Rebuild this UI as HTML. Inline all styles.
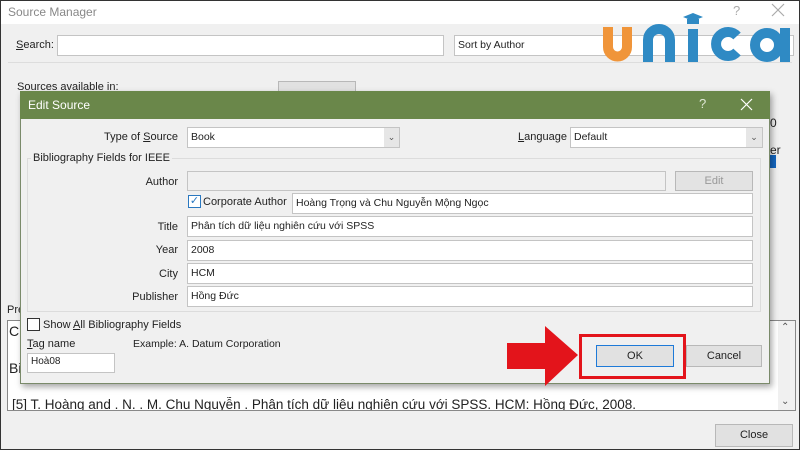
<!DOCTYPE html><html><head><meta charset="utf-8"><style>
*{margin:0;padding:0;box-sizing:border-box}
body{width:800px;height:450px;overflow:hidden;background:#f0f0f0;font-family:"Liberation Sans",sans-serif;font-size:11px;color:#222;position:relative}
.a{position:absolute;white-space:nowrap}
.in{position:absolute;background:#fff;border:1px solid #c4c4c4;padding:0 3px;font-size:10.5px;line-height:19px;white-space:nowrap}
.btn{position:absolute;background:#e1e1e1;border:1px solid #b8b8b8;text-align:center;font-size:11px}
.lbl{position:absolute;text-align:right;white-space:nowrap}
</style></head><body>
<div class="a" style="left:0;top:0;width:800px;height:24px;background:#fff;border:1px solid #333;border-bottom:none"></div>
<div class="a" style="left:0;top:0;width:800px;height:450px;border:1px solid #333;border-top:none"></div>
<div class="a" style="left:8px;top:5px;font-size:12px;color:#888">Source Manager</div>
<div class="a" style="left:733px;top:3px;font-size:13px;color:#aaa">?</div>
<svg class="a" style="left:771px;top:3px" width="14" height="14"><path d="M1 1L13 13M13 1L1 13" stroke="#aaa" stroke-width="1.2"/></svg>
<div class="a" style="left:16px;top:39px"><u>S</u>earch:</div>
<div class="in" style="left:57px;top:35px;width:387px;height:21px"></div>
<div class="in" style="left:454px;top:35px;width:340px;height:21px">Sort by Author</div>
<div class="a" style="left:8px;top:62px;width:784px;height:1px;background:#ddd"></div>
<div class="a" style="left:17px;top:81px">Sou<u>r</u>ces available in:</div>
<div class="btn" style="left:278px;top:81px;width:78px;height:14px"></div>
<div class="a" style="left:770px;top:116px;font-size:12px">0</div>
<div class="a" style="left:770px;top:143px;font-size:12px">er</div>
<div class="a" style="left:770px;top:155px;width:6px;height:13px;background:#1466c0"></div>
<div class="a" style="left:7px;top:304px">Pre</div>
<div class="a" style="left:7px;top:320px;width:789px;height:91px;background:#fff;border:1px solid #888"></div>
<div class="a" style="left:778px;top:321px;width:17px;height:89px;background:#f0f0f0"></div>
<div class="a" style="left:781px;top:322px;font-size:10px;color:#555">⌃</div>
<div class="a" style="left:781px;top:396px;font-size:10px;color:#555">⌄</div>
<div class="a" style="left:9px;top:323px;font-size:14px">Ci</div>
<div class="a" style="left:9px;top:360px;font-size:14px">Bi</div>
<div class="a" style="left:12px;top:397px;font-size:13.5px;height:13px;overflow:hidden;text-decoration:underline">[5] T. Hoàng and . N. . M. Chu Nguyễn . Phân tích dữ liệu nghiên cứu với SPSS. HCM: Hồng Đức, 2008.</div>
<div class="btn" style="left:715px;top:424px;width:78px;height:23px;line-height:21px">Close</div>

<svg class="a" style="left:0;top:0" width="800" height="80">
<path d="M608 27V47a9.5 9.5 0 0 0 19 0V27" fill="none" stroke="#f0953a" stroke-width="10"/>
<path d="M648 62V40a11 11 0 0 1 22 0V62" fill="none" stroke="#2f8ac4" stroke-width="10"/>
<rect x="688" y="29" width="10" height="33" fill="#2f8ac4"/>
<path d="M683 17l10-4 10 4-10 4z" fill="#2f8ac4"/><path d="M687 19v5h12v-5" fill="#2f8ac4"/>
<path d="M737 36A12 12 0 1 0 737 52" fill="none" stroke="#2f8ac4" stroke-width="10"/>
<circle cx="767" cy="45" r="12" fill="none" stroke="#2f8ac4" stroke-width="10"/>
<rect x="780" y="28" width="10" height="34" fill="#2f8ac4"/>
</svg>

<!-- Edit Source dialog -->
<div class="a" style="left:20px;top:91px;width:750px;height:293px;background:#f0f0f0;border:1px solid #7a8a6a;box-shadow:2px 3px 6px rgba(0,0,0,.35)"></div>
<div class="a" style="left:20px;top:91px;width:750px;height:28px;background:#6a874a"></div>
<div class="a" style="left:28px;top:98px;font-size:12px;color:#fff">Edit Source</div>
<div class="a" style="left:699px;top:96px;font-size:13px;color:#dfe8d6">?</div>
<svg class="a" style="left:740px;top:98px" width="13" height="13"><path d="M1 1L12 12M12 1L1 12" stroke="#fff" stroke-width="1.2"/></svg>
<div class="lbl" style="left:60px;width:118px;top:131px">Type of <u>S</u>ource</div>
<div class="in" style="left:187px;top:127px;width:213px;height:21px">Book</div>
<div class="a" style="left:384px;top:128px;width:15px;height:19px;background:#e6e6e6;font-size:9px;text-align:center;line-height:19px;color:#555">⌄</div>
<div class="a" style="left:518px;top:131px"><u>L</u>anguage</div>
<div class="in" style="left:570px;top:127px;width:193px;height:21px">Default</div>
<div class="a" style="left:746px;top:128px;width:16px;height:19px;background:#e6e6e6;font-size:9px;text-align:center;line-height:19px;color:#555">⌄</div>
<div class="a" style="left:27px;top:158px;width:734px;height:154px;border:1px solid #dcdcdc"></div>
<div class="a" style="left:31px;top:152px;background:#f0f0f0;padding:0 2px">Bibliography Fields for IEEE</div>
<div class="lbl" style="left:100px;width:78px;top:176px">Author</div>
<div class="in" style="left:187px;top:171px;width:479px;height:20px;background:#f0f0f0"></div>
<div class="btn" style="left:675px;top:171px;width:78px;height:20px;line-height:18px;color:#999;background:#e3e3e3">Edit</div>
<div class="a" style="left:188px;top:195px;width:13px;height:13px;background:#fff;border:1px solid #2a78c0;font-size:11px;line-height:11px;color:#2a78c0;text-align:center">✓</div>
<div class="a" style="left:203px;top:196px">Corporate Author</div>
<div class="in" style="left:292px;top:193px;width:461px;height:21px">Hoàng Trọng và Chu Nguyễn Mộng Ngọc</div>
<div class="lbl" style="left:100px;width:78px;top:221px">Title</div>
<div class="in" style="left:187px;top:216px;width:566px;height:21px">Phân tích dữ liệu nghiên cứu với SPSS</div>
<div class="lbl" style="left:100px;width:78px;top:244px">Year</div>
<div class="in" style="left:187px;top:240px;width:566px;height:21px">2008</div>
<div class="lbl" style="left:100px;width:78px;top:268px">City</div>
<div class="in" style="left:187px;top:263px;width:566px;height:21px">HCM</div>
<div class="lbl" style="left:100px;width:78px;top:291px">Publisher</div>
<div class="in" style="left:187px;top:286px;width:566px;height:21px">Hồng Đức</div>
<div class="a" style="left:27px;top:318px;width:13px;height:13px;background:#fff;border:1px solid #333"></div>
<div class="a" style="left:43px;top:319px">Show <u>A</u>ll Bibliography Fields</div>
<div class="a" style="left:27px;top:338px"><u>T</u>ag name</div>
<div class="a" style="left:133px;top:338px;font-size:10.5px">Example: A. Datum Corporation</div>
<div class="in" style="left:27px;top:353px;width:88px;height:20px;font-size:10px;line-height:16px">Hoà08</div>
<div class="btn" style="left:596px;top:345px;width:78px;height:22px;line-height:20px;border-color:#1e7ad8">OK</div>
<div class="btn" style="left:686px;top:345px;width:76px;height:22px;line-height:20px">Cancel</div>
<div class="a" style="left:579px;top:334px;width:107px;height:45px;border:3px solid #e3141b"></div>
<svg class="a" style="left:500px;top:320px" width="85" height="70"><path d="M7 23H45V6L78 35L45 66V49H7Z" fill="#e3141b"/></svg>
</body></html>
